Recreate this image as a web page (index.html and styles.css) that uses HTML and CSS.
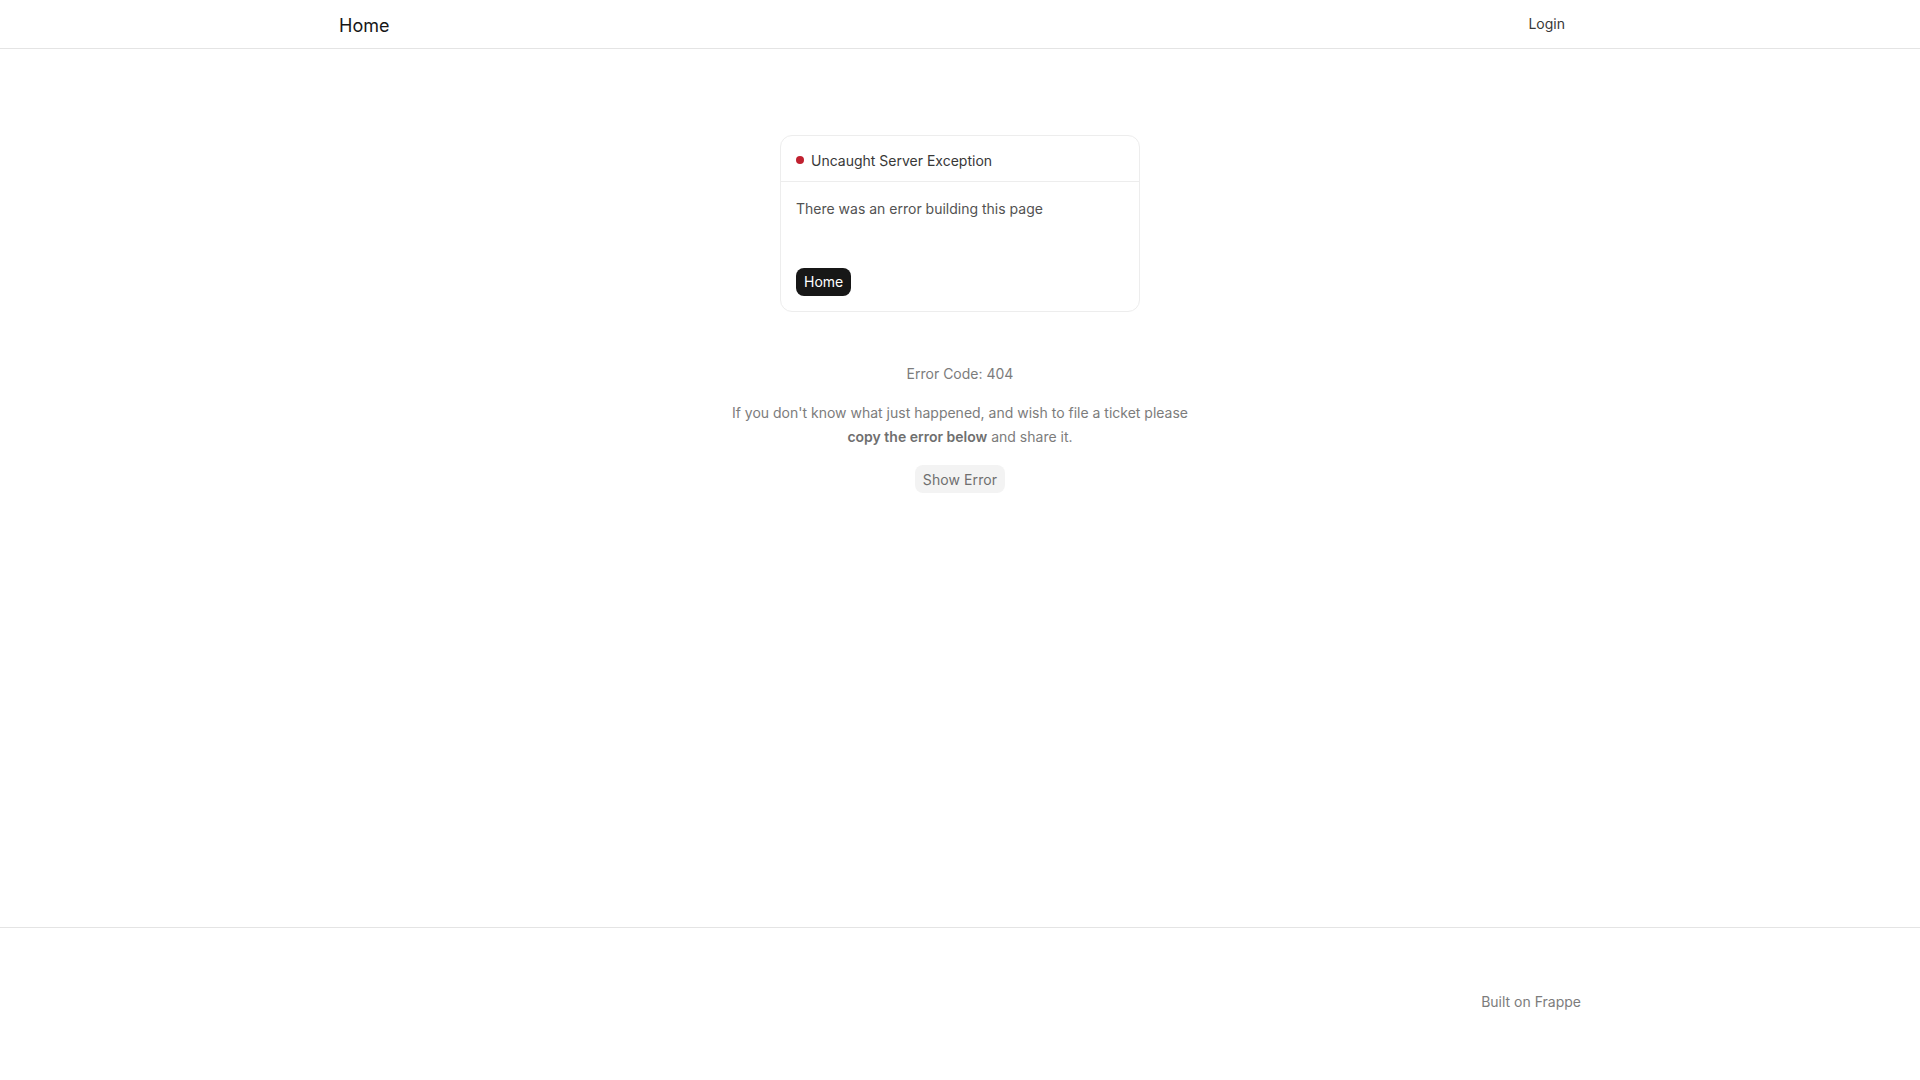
FILE: index.html
```html
<!DOCTYPE html>
<html lang="en">
    <head>
        <meta charset="UTF-8" />
        <meta name="viewport" content="width=device-width, initial-scale=1.0" />
        <title>Uncaught Server Exception</title>
        <link rel="stylesheet" href="styles.css">
    </head>
    <body>
        <!-- 상단 네비게이션 -->
        <nav class="navbar">
            <div class="container nav-inner">
                <a class="brand" href="#">Home</a>
                <a class="nav-link" href="#">Login</a>
            </div>
        </nav>

        <!-- 본문 -->
        <main class="page-content">
            <div class="err-card">
                <div class="err-head">
                    <span class="dot"></span>
                    <span>Uncaught Server Exception</span>
                </div>
                <div class="err-body">
                    <p class="err-msg">There was an error building this page</p>
                    <a class="btn-dark" href="#">Home</a>
                </div>
            </div>

            <div class="err-info">
                <p class="err-code">Error Code: 404</p>
                <p class="err-help">
                    If you don't know what just happened, and wish to file a ticket please
                    <b>copy the error below</b> and share it.
                </p>
                <button class="btn-light">Show Error</button>
            </div>
        </main>

        <!-- 하단 푸터 -->
        <footer class="footer">
            <div class="container footer-inner">
                <a class="built" href="#">Built on Frappe</a>
            </div>
        </footer>
    </body>
</html>
```

FILE: styles.css
```css
* {
    box-sizing: border-box;
}
body {
    margin: 0;
    min-height: 100vh;
    display: flex;
    flex-direction: column;
    font-family: Inter, "Liberation Sans", sans-serif;
    font-size: 14px;
    color: #383838;
    background: #fff;
}
a {
    text-decoration: none;
    color: inherit;
}
.container {
    width: 1242px;
    margin: 0 auto;
}
/* 네비게이션 */
.navbar {
    height: 49px;
    border-bottom: 1px solid #e4e4e4;
}
.nav-inner {
    height: 48px;
    display: flex;
    align-items: center;
    justify-content: space-between;
}
.brand {
    font-size: 18px;
    color: #171717;
    padding-top: 2px;
}
.nav-link {
    font-size: 14px;
    color: #383838;
    padding: 0 16px 1px;
}
/* 본문 */
.page-content {
    flex: 1;
    display: flex;
    flex-direction: column;
    align-items: center;
    padding-top: 86px;
}
.err-card {
    width: 360px;
    border: 1px solid #ededed;
    border-radius: 12px;
}
.err-head {
    height: 46px;
    padding: 3px 15px 0;
    display: flex;
    align-items: center;
    gap: 7px;
    border-bottom: 1px solid #ededed;
    color: #383838;
}
.dot {
    width: 8px;
    height: 8px;
    border-radius: 50%;
    background: #c0212f;
}
.err-body {
    padding: 17px 15px 15px;
}
.err-msg {
    margin: 0 0 49px;
    line-height: 20px;
    color: #525252;
}
.btn-dark {
    display: inline-block;
    height: 28px;
    line-height: 28px;
    padding: 0 8px;
    border-radius: 8px;
    background: #171717;
    color: #fff;
}
.err-info {
    text-align: center;
    color: #7c7c7c;
    margin-top: 52px;
}
.err-code {
    margin: 0 0 17px;
    line-height: 20px;
}
.err-help {
    width: 460px;
    margin: 0 0 16px;
    line-height: 24px;
}
.err-help b {
    font-weight: 600;
    color: #6f6f6f;
}
.btn-light {
    height: 28px;
    padding: 0 8px;
    border: none;
    border-radius: 8px;
    background: #f3f3f3;
    color: #6f6f6f;
    font-family: inherit;
    font-size: 14px;
    letter-spacing: 0.1px;
}
/* 푸터 */
.footer {
    height: 153px;
    border-top: 1px solid #e4e4e4;
    padding-top: 64px;
}
.footer-inner {
    display: flex;
    justify-content: flex-end;
}
.built {
    color: #7c7c7c;
    line-height: 20px;
}
```
